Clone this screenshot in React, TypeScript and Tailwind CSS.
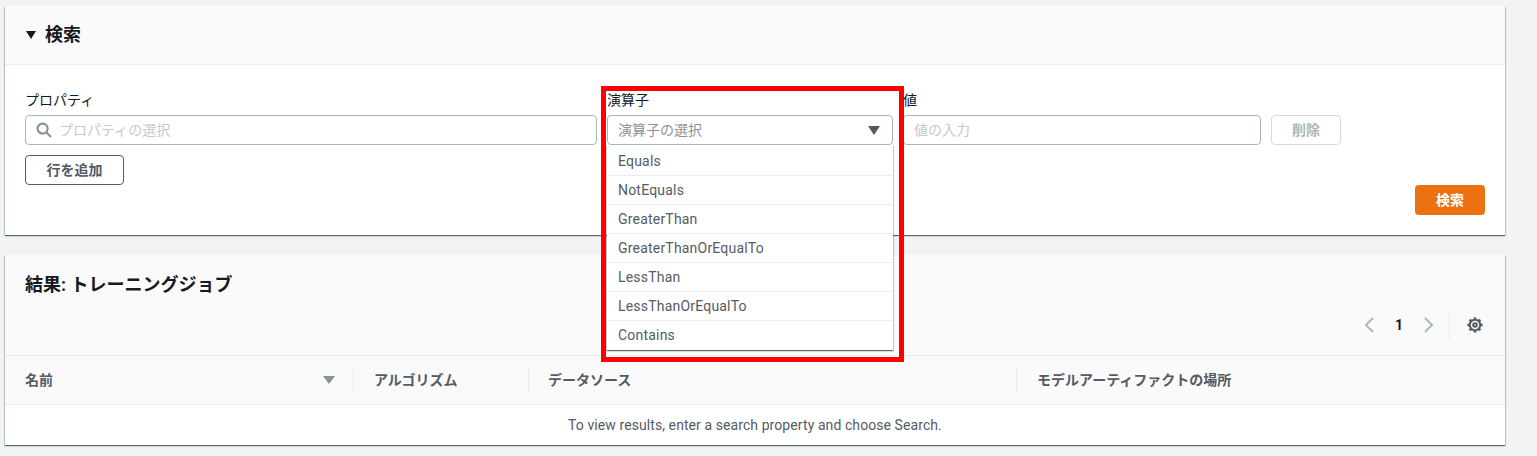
import { Fragment } from "react";

const operators = [
  "Equals",
  "NotEquals",
  "GreaterThan",
  "GreaterThanOrEqualTo",
  "LessThan",
  "LessThanOrEqualTo",
  "Contains",
];

const font = "font-['Roboto','Noto_Sans_CJK_JP',sans-serif]";
const card =
  "bg-white shadow-[0_1px_1px_0_rgba(0,28,36,0.5),1px_1px_1px_0_rgba(0,28,36,0.15),-1px_1px_1px_0_rgba(0,28,36,0.15)]";

function Caret({ className }: { className: string }) {
  return (
    <svg viewBox="0 0 12 9" preserveAspectRatio="none" className={className} fill="currentColor">
      <path d="M0 0h12L6 9z" />
    </svg>
  );
}

function SearchIcon() {
  return (
    <svg viewBox="0 0 16 16" className="h-4 w-4 shrink-0 text-[#879596]" fill="none" stroke="currentColor" strokeWidth="2.2">
      <circle cx="6.6" cy="6.6" r="5" />
      <path d="m10.2 10.2 4.8 4.8" />
    </svg>
  );
}

function Gear() {
  return (
    <svg viewBox="0 0 16 16" className="h-4 w-4 text-[#545b64]" fill="none" stroke="currentColor" strokeWidth="2">
      <circle cx="8" cy="8" r="5.2" />
      <circle cx="8" cy="8" r="1.8" />
      {[0, 45, 90, 135, 180, 225, 270, 315].map((a) => (
        <Fragment key={a}>
          <path d="M8 3V0.4" strokeWidth="2.6" transform={`rotate(${a} 8 8)`} />
        </Fragment>
      ))}
    </svg>
  );
}

export default function App() {
  return (
    <div className={`relative h-[456px] overflow-hidden bg-[#f2f3f3] pl-[5px] pr-8 pt-1.5 text-sm text-[#16191f] ${font}`}>
      <section className={`h-[229px] ${card}`}>
        <div className="flex h-[59px] items-center gap-[9px] border-b border-[#eaeded] bg-[#fafafa] pl-[21px]">
          <Caret className="h-2 w-2.5 text-[#16191f]" />
          <h2 className="text-lg leading-none font-bold">検索</h2>
        </div>

        <div className="relative px-5 pt-[25px]">
          <div className="grid grid-cols-[572px_286px_358px_70px] gap-x-2.5">
            <div>
              <label className="block h-[25px] leading-5">プロパティ</label>
              <div className="flex h-[30px] items-center gap-[7px] rounded-sm border border-[#aab7b8] px-2.5">
                <SearchIcon />
                <span className="text-[#c3cbcc]">プロパティの選択</span>
              </div>
            </div>

            <div className="relative">
              <label className="block h-[25px] leading-5">演算子</label>
              <div className="flex h-[30px] items-center justify-between rounded-sm border border-[#aab7b8] px-2.5 text-[#879596]">
                <span>演算子の選択</span>
                <Caret className="mr-[2px] h-[9px] w-3 text-[#545b64]" />
              </div>
              <ul className="absolute top-[55px] left-0 z-10 w-[286px] bg-white pt-[2px] tracking-[0.2px] shadow-[0_1px_1px_0_rgba(0,28,36,0.5),1px_1px_1px_0_rgba(0,28,36,0.15),-1px_1px_1px_0_rgba(0,28,36,0.15)]">
                {operators.map((op, i) => (
                  <li
                    key={op}
                    className={`flex h-[29px] items-center border-b pl-[11px] text-[#545b64] ${
                      i < operators.length - 1 ? "border-[#eaeded]" : "border-transparent"
                    }`}
                  >
                    {op}
                  </li>
                ))}
              </ul>
            </div>

            <div>
              <label className="block h-[25px] leading-5">値</label>
              <div className="flex h-[30px] items-center rounded-sm border border-[#aab7b8] px-2.5 text-[#c3cbcc]">
                値の入力
              </div>
            </div>

            <div className="pt-[25px]">
              <button className="h-[30px] w-[70px] rounded-sm border border-[#d5dbdb] font-bold text-[#aab7b8]">
                削除
              </button>
            </div>
          </div>

          <button className="mt-2.5 h-[30px] w-[99px] rounded-sm border border-[#545b64] font-bold text-[#545b64]">
            行を追加
          </button>

          <div className="flex justify-end">
            <button className="h-[30px] w-[70px] rounded-sm bg-[#ec7211] font-bold text-white">
              検索
            </button>
          </div>
        </div>
      </section>

      <section className={`mt-5 h-[190px] ${card}`}>
        <div className="relative h-[101px] border-b border-[#eaeded] bg-[#fafafa] px-5 pt-[17px]">
          <h2 className="text-lg leading-[26px] font-bold">結果: トレーニングジョブ</h2>
          <div className="absolute top-[54px] right-[22px] flex h-[32px] items-center">
            <svg viewBox="0 0 10 16" className="h-4 w-2.5 text-[#aab7b8]" fill="none" stroke="currentColor" strokeWidth="2">
              <path d="M9 1 2 8l7 7" />
            </svg>
            <span className="ml-[21px] font-bold">1</span>
            <svg viewBox="0 0 10 16" className="ml-[21px] h-4 w-2.5 text-[#aab7b8]" fill="none" stroke="currentColor" strokeWidth="2">
              <path d="m1 1 7 7-7 7" />
            </svg>
            <div className="mr-[17px] ml-[15px] h-[30px] border-l border-[#eaeded]" />
            <Gear />
          </div>
        </div>

        <div className="grid h-[49px] grid-cols-[349px_175px_488px_1fr] items-center border-b border-[#eaeded] bg-[#fafafa] font-bold text-[#545b64]">
          <div className="flex h-6 items-center justify-between border-r border-[#eaeded] pr-[18px] pl-5">
            <span>名前</span>
            <Caret className="h-2 w-3 text-[#879596]" />
          </div>
          <div className="flex h-6 items-center border-r border-[#eaeded] pl-5">アルゴリズム</div>
          <div className="flex h-6 items-center border-r border-[#eaeded] pl-[19px]">データソース</div>
          <div className="flex h-6 items-center pl-5">モデルアーティファクトの場所</div>
        </div>

        <div className="flex h-10 items-center justify-center tracking-[0.08px] text-[#545b64]">
          To view results, enter a search property and choose Search.
        </div>
      </section>

      {/* annotation frame from the screenshot */}
      <div className="pointer-events-none absolute top-[86px] left-[601px] z-20 h-[276px] w-[303px] border-[5px] border-[#ff0000]" />
    </div>
  );
}
